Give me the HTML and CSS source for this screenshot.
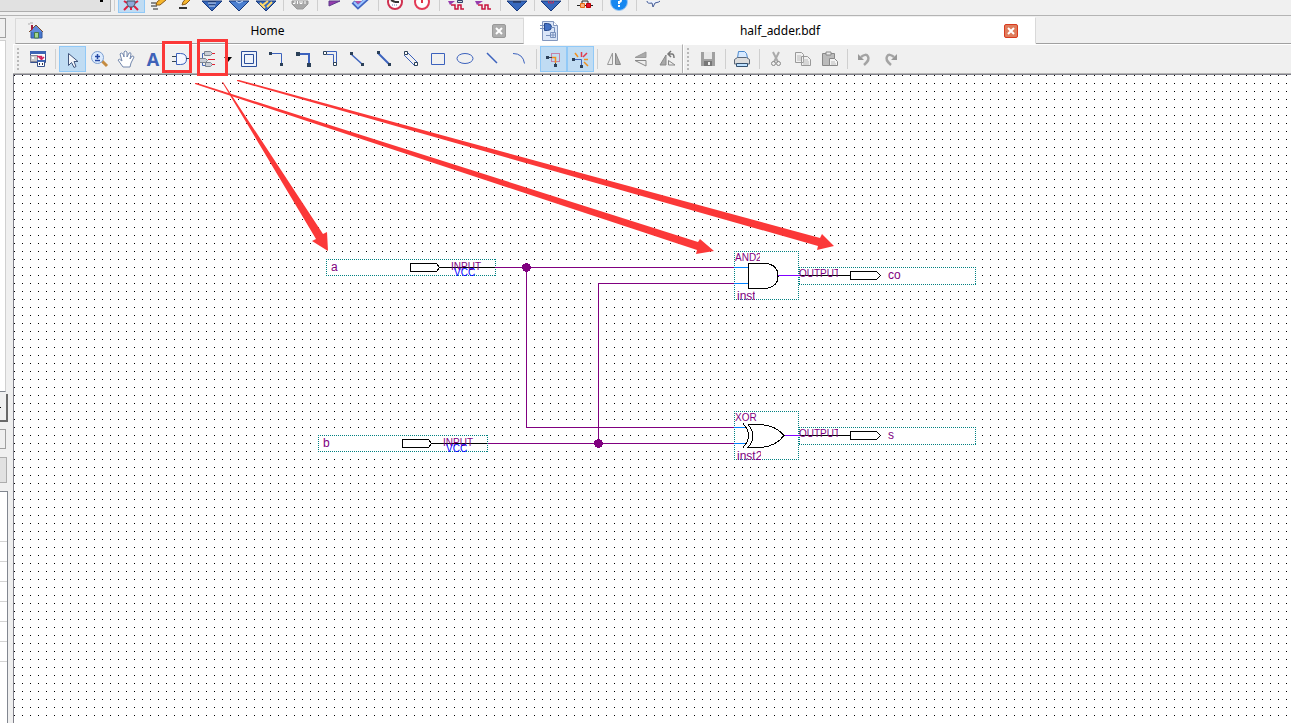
FILE: index.html
```html
<!DOCTYPE html>
<html lang="en">
<head>
<meta charset="utf-8">
<title>half_adder.bdf</title>
<link rel="stylesheet" href="styles.css">
</head>
<body>
<div class="app">
  <header class="main-bar">
    <select class="project-select" aria-label="Project"><option></option></select>
    <span class="sep"></span>
    <button class="tool on" aria-label="Assignment editor"><svg viewBox="0 0 24 11"><path d="M5 0l3 2M19 0l-3 2M5 9l4-4M19 9l-4-4M12 5v4" stroke="#e02040" stroke-width="2" fill="none"/><path d="M8 0h8v3l-2 3h-4L8 3z" fill="#8fa8d8" stroke="#456"/></svg></button>
    <button class="tool" aria-label="Edit assignments"><svg viewBox="0 0 24 11"><path d="M10 4l1-3 6-5 3 3-6 5z" fill="#f6b62c" stroke="#8a5a18"/><path d="M5 2h5M5 5h6M7 8h5" stroke="#222"/></svg></button>
    <button class="tool" aria-label="Edit settings"><svg viewBox="0 0 24 11"><path d="M9 4l1-3 5-6 3 3-5 5z" fill="#f6b62c" stroke="#8a5a18"/><path d="M6 7h8" stroke="#333" stroke-width="2"/></svg></button>
    <button class="tool" aria-label="Pin planner"><svg viewBox="0 0 24 11"><path d="M2 0h20L12 10z" fill="#3668bd" stroke="#17397c"/><path d="M8 1h8M9 4h6" stroke="#16244a"/><path d="M8 2h8M9 5h6" stroke="#c9e0ff"/></svg></button>
    <button class="tool" aria-label="Chip planner"><svg viewBox="0 0 24 11"><path d="M2 0h20L12 10z" fill="#4b7fd0" stroke="#17397c"/><path d="M9 0l3 2 4-2" stroke="#c9e0ff" fill="none"/></svg></button>
    <button class="tool" aria-label="Netlist viewer"><svg viewBox="0 0 24 11"><path d="M2 0h20L12 10z" fill="#3668bd" stroke="#17397c"/><path d="M6 2l5 5M14 0l-5 4M18 1l-5 5" stroke="#ffd968" stroke-width="2" fill="none"/></svg></button>
    <span class="sep"></span>
    <button class="tool" aria-label="Stop processing"><svg viewBox="0 0 24 11"><path d="M4 0h16v3l-5 5H9L4 3z" fill="#a8a8a8" stroke="#999"/><path d="M5 2.500h2V0M9.500 0v3M12 0v2.500h2V0M17 3V0" stroke="#fff" fill="none"/></svg></button>
    <span class="sep"></span>
    <button class="tool" aria-label="Start compilation"><svg viewBox="0 0 24 11"><path d="M7 0h11L7 5z" fill="#963cad" stroke="#5c3b8b"/></svg></button>
    <button class="tool" aria-label="Start analysis"><svg viewBox="0 0 24 11"><path d="M6 0h10L7 4z" fill="#b250a8"/><path d="M4 1l5 5L20-4" stroke="#3f63c0" stroke-width="4" fill="none"/><path d="M5 1l4 4L19-4" stroke="#9cc4ff" stroke-width="2" fill="none"/></svg></button>
    <span class="sep"></span>
    <button class="tool" aria-label="Timing analyzer"><svg viewBox="0 0 24 11"><circle cx="12" cy="1" r="7" fill="#fff" stroke="#cf3150" stroke-width="2"/><path d="M12 1L8-1M12 1h4" stroke="#333" stroke-width="2"/><path d="M9 4h6" stroke="#6a7bb0" stroke-dasharray="1 1"/></svg></button>
    <button class="tool" aria-label="Start timing analysis"><svg viewBox="0 0 24 11"><circle cx="12" cy="1" r="7" fill="#fff" stroke="#e33b56" stroke-width="2"/><path d="M12-3v5" stroke="#d34" stroke-width="2"/></svg></button>
    <span class="sep"></span>
    <button class="tool" aria-label="Gate simulation"><svg viewBox="0 0 24 11"><path d="M4 0h7L6 4z" fill="#963cad"/><path d="M13.500-.5h5v2h-5z" fill="#cdd" stroke="#33406b"/><path d="M7 4h4v4h3V4h3v4h3" stroke="#c8143c" stroke-width="1.500" fill="none"/></svg></button>
    <button class="tool" aria-label="Functional simulation"><svg viewBox="0 0 24 11"><path d="M4 0h8L6 4z" fill="#963cad"/><path d="M7 4h4v4h3V4h3v4h3" stroke="#c8143c" stroke-width="1.500" fill="none"/></svg></button>
    <span class="sep"></span>
    <button class="tool" aria-label="Compilation report"><svg viewBox="0 0 24 11"><path d="M2 0h20L12 10z" fill="#3668bd" stroke="#17397c"/><path d="M8 1h8" stroke="#223" stroke-width="1"/></svg></button>
    <span class="sep"></span>
    <button class="tool" aria-label="Programmer view"><svg viewBox="0 0 24 11"><path d="M2 0h20L12 10z" fill="#3668bd" stroke="#17397c"/><path d="M9.500 0v2h5V0M12 0v2" fill="none" stroke="#b03560"/></svg></button>
    <span class="sep"></span>
    <button class="tool" aria-label="Programmer"><svg viewBox="0 0 24 11"><path d="M9 3V0h6v3M4 4.500h16" stroke="#222" fill="none"/><path d="M7.500 2.500h4v4h-4z" fill="#ffb080" stroke="#e46a14"/><path d="M13.500 2.500h4v4h-4z" fill="#e01030" stroke="#b00"/></svg></button>
    <span class="sep"></span>
    <button class="tool" aria-label="Help"><svg viewBox="0 0 24 11"><circle cx="12" cy="1" r="8.500" fill="#1687f0" stroke="#9cc8f4"/><path d="M14-1q0 2-2 2v2M12 4v2" stroke="#fff" stroke-width="2" fill="none"/></svg></button>
    <span class="sep"></span>
    <button class="tool" aria-label="Feedback"><svg viewBox="0 0 24 11"><path d="M6 0q0 3 5 2l1 4 2-4q5-1 5-2" fill="#eaf1ff" stroke="#435a94"/></svg></button>
  </header>

  <div class="workspace">
    <aside class="side" aria-label="Navigator">
      <div class="side-title"></div>
      <div class="side-tree"></div>
      <button class="side-button" aria-label="Collapse"><svg viewBox="0 0 6 26"><path d="M0 13.500h1" stroke="#000"/></svg></button>
      <div class="side-field"></div>
      <div class="side-head"></div>
      <div class="side-list">
        <div class="side-row first"></div><div class="side-row"></div><div class="side-row"></div><div class="side-row"></div><div class="side-row"></div><div class="side-row"></div><div class="side-row"></div>
      </div>
    </aside>

    <main class="editor">
      <nav class="tabs">
        <div class="tab">
          <svg class="tab-icon" viewBox="0 0 20 20"><path d="M5 10h11v7H5z" fill="#4676cf" stroke="#34589c"/><path d="M3 11l7-7 7 7" fill="#5f8bdc" stroke="#7a4a2c"/><path d="M5 4h2v4l-2 2z" fill="#a01c3c"/><path d="M8.500 11.500h4V17h-4z" fill="#a4d68e" stroke="#467a4a"/><path d="M2 3h2M4 2h3" stroke="#aaa"/></svg>
          <a class="tab-name" href="#home">Home</a>
          <button class="close" aria-label="Close Home"><svg viewBox="0 0 12 12"><path d="M3 3l6 6M9 3l-6 6" stroke="#fff" stroke-width="2"/></svg></button>
        </div>
        <div class="tab active">
          <svg class="tab-icon" viewBox="0 0 20 20"><path d="M3.500.500h11l4 4v15h-15z" fill="#dbe6f8" stroke="#8296bd"/><path d="M14.500.500v4h4" fill="#fff" stroke="#8296bd"/><path d="M5.500 2.500h3q4 0 4 3.500t-4 3.500h-3z" fill="#4371c4" stroke="#27498c"/><path d="M1 4.500h4M1 7.500h4M12 6.500h3.500V11M7 14.500h4M11.500 11.500h5v5h-5zM14 12v5M11 14h6" fill="none" stroke="#7890bc"/></svg>
          <a class="tab-name" href="#half-adder">half_adder.bdf</a>
          <button class="close red" aria-label="Close half_adder.bdf"><svg viewBox="0 0 12 12"><path d="M3 3l6 6M9 3l-6 6" stroke="#fff" stroke-width="2"/></svg></button>
        </div>
        <div class="tab-rest"></div>
      </nav>

      <div class="bars">
        <div class="bar">
          <span class="grip"></span>
          <button class="tool" aria-label="Detach window"><svg viewBox="0 0 24 24"><path d="M4.500 4.500h15v11h-15z" fill="#fff" stroke="#36508c"/><path d="M4 4h16v3H4z" fill="#3c64b4"/><path d="M4.500 8.500h7v6h-7z" fill="#ccc" stroke="#889"/><path d="M6 10h2v2H6z" fill="#fff"/><path d="M11 9.500h4.500V12M13 10l2.500 2.500L18 10" fill="none" stroke="#d0205a" stroke-width="1.500"/><path d="M11.500 13.500h7v6h-7z" fill="#fff" stroke="#36508c"/><path d="M11 13h8v2h-8z" fill="#3c64b4"/><path d="M13 16h1v2h-1zM16 16h1v2h-1z" fill="#334"/></svg></button>
          <span class="sep"></span>
          <button class="tool on" aria-label="Selection tool"><svg viewBox="0 0 24 24"><path d="M8.500 6.500v12l3-3 2.500 5 2-1-2-5h4z" fill="#f4f6fa" stroke="#41557c"/></svg></button>
          <button class="tool" aria-label="Zoom tool"><svg viewBox="0 0 24 24"><path d="M15 14l5 5" stroke="#c58b40" stroke-width="3"/><circle cx="10.500" cy="10.500" r="6" fill="#dcebff" stroke="#7d9fd0"/><path d="M8 9.500h5M10.500 7v5M8 13.500h5" stroke="#2548a4" stroke-width="1.500"/></svg></button>
          <button class="tool" aria-label="Hand tool"><svg viewBox="0 0 24 24"><path d="M9 20L4 13q1-2 4 1L6 7q1-2 3 0l1 3V5q1-2 3 0v5l2-4q2-1 2 1l-1 5 2-3q2 0 2 1l-3 6-1 4z" fill="#fff" stroke="#7488ad"/></svg></button>
          <button class="tool letter" aria-label="Text tool">A</button>
          <button class="tool" aria-label="Symbol tool"><svg viewBox="0 0 24 24"><path d="M8.500 6.500h4q6 0 6 5.500t-6 5.500h-4z" fill="#f4f7ff" stroke="#3c62bd"/><path d="M4 9.500h4M4 14.500h4M18 11.500h3" stroke="#345"/></svg></button>
          <button class="tool" aria-label="Pin tool"><svg viewBox="0 0 24 24"><path d="M7.500 13V6.500H11M7.500 15v3.500H11" fill="none" stroke="#4468b4"/><path d="M9.500 4.500h6l2 2-2 2h-6zM4.500 11.500h6l2 2-2 2h-6zM10.500 15.500h5l2 2-2 2h-5z" fill="#c9ced6" stroke="#7c8590"/><path d="M17 6.500h3M13 12.500h7M17 17.500h3" stroke="#e02030"/></svg></button>
          <button class="tool drop" aria-label="Pin types"><svg viewBox="0 0 14 24"><path d="M3 10h8l-4 5z" fill="#000"/></svg></button>
          <button class="tool" aria-label="Block tool"><svg viewBox="0 0 24 24"><path d="M4.500 4.500h15v15h-15zM7.500 7.500h9v9h-9z" fill="#eef3fb" stroke="#2c4f9c"/></svg></button>
          <button class="tool" aria-label="Orthogonal node"><svg viewBox="0 0 24 24"><path d="M6 6.500h11.500V17" fill="none" stroke="#3c62bd"/><path d="M5 5h3v3H5zM16 16h3v3h-3z" fill="#2b4058"/></svg></button>
          <button class="tool" aria-label="Orthogonal bus"><svg viewBox="0 0 24 24"><path d="M6 7h12v10" fill="none" stroke="#3c62bd" stroke-width="2"/><path d="M5 5h4v4H5zM16 16h4v4h-4z" fill="#2b4058"/></svg></button>
          <button class="tool" aria-label="Orthogonal conduit"><svg viewBox="0 0 24 24"><path d="M9 4.500h9.500V16M9 7.500h6.500V16" fill="none" stroke="#3c62bd"/><path d="M5.500 4.500h3v3h-3zM15.500 15.500h3v3h-3z" fill="#fff" stroke="#2b4058"/></svg></button>
          <button class="tool" aria-label="Diagonal node"><svg viewBox="0 0 24 24"><path d="M6 7l11 10" stroke="#3c62bd" stroke-width="1.500"/><path d="M5 5h3v3H5zM16 16h3v3h-3z" fill="#2b4058"/></svg></button>
          <button class="tool" aria-label="Diagonal bus"><svg viewBox="0 0 24 24"><path d="M6 6l12 12" stroke="#3c62bd" stroke-width="2"/><path d="M5 4h3v3H5zM16 16h3v3h-3z" fill="#2b4058"/></svg></button>
          <button class="tool" aria-label="Diagonal conduit"><svg viewBox="0 0 24 24"><path d="M8 5l11 11M5 8l11 11" stroke="#3c62bd"/><path d="M5.500 4.500h3v3h-3zM15.500 15.500h3v3h-3z" fill="#fff" stroke="#2b4058"/></svg></button>
          <button class="tool" aria-label="Rectangle"><svg viewBox="0 0 24 24"><path d="M5.500 6.500h13v11h-13z" fill="none" stroke="#3c62bd"/></svg></button>
          <button class="tool" aria-label="Oval"><svg viewBox="0 0 24 24"><ellipse cx="12" cy="11.500" rx="8" ry="5" fill="none" stroke="#3c62bd"/></svg></button>
          <button class="tool" aria-label="Line"><svg viewBox="0 0 24 24"><path d="M7 6l10 10" stroke="#3c62bd" stroke-width="1.500"/></svg></button>
          <button class="tool" aria-label="Arc"><svg viewBox="0 0 24 24"><path d="M6 6.500q10 0 11.500 10" fill="none" stroke="#3c62bd"/></svg></button>
          <span class="sep"></span>
          <button class="tool on" aria-label="Rubberbanding"><svg viewBox="0 0 24 24"><path d="M10.500 6.500h8v8h-8z" fill="none" stroke="#c8285a" stroke-dasharray="1 1"/><path d="M8 10.500h4M14.500 15v3" stroke="#2b4058"/><path d="M11 10.500h3.500V16" fill="none" stroke="#f09020" stroke-width="1.500"/><path d="M5 9h3v3H5zM13 17h3v3h-3z" fill="#2b4058"/></svg></button>
          <button class="tool on" aria-label="Partial line selection"><svg viewBox="0 0 24 24"><path d="M6 12.500h7.500V18" fill="none" stroke="#3c62bd"/><path d="M4 11h3v3H4zM12 18h3v3h-3z" fill="#2b4058"/><path d="M7 6l3 4M16 12.500h4M16 15l4 4" stroke="#f09020" stroke-width="1.500"/><path d="M13.500 5v5M19 6l-4 4" stroke="#e03a4c" stroke-width="1.500"/></svg></button>
          <span class="sep"></span>
          <button class="tool" aria-label="Flip horizontal"><svg viewBox="0 0 24 24"><path d="M10.500 6v11.500h-5z" fill="#eee" stroke="#999"/><path d="M13.500 6v11.500h5z" fill="#aaa" stroke="#888"/></svg></button>
          <button class="tool" aria-label="Flip vertical"><svg viewBox="0 0 24 24"><path d="M17 5v5.500H6z" fill="#aaa" stroke="#999"/><path d="M6 13.500h11V19z" fill="#eee" stroke="#888"/></svg></button>
          <button class="tool" aria-label="Rotate left"><svg viewBox="0 0 24 24"><path d="M10 8v10H4z" fill="#aaa" stroke="#888"/><path d="M12.500 13.500V18H19z" fill="#eee" stroke="#888"/><path d="M13 7h3q2 0 2 4M15 4l-3 3 3 3" fill="none" stroke="#777" stroke-width="1.500"/></svg></button>
        </div>
        <div class="bar grow">
          <span class="grip"></span>
          <button class="tool" aria-label="Save"><svg viewBox="0 0 24 24"><path d="M5 5h14v14H5z" fill="#a0a0a0"/><path d="M8 5h8v7H8z" fill="#e8e8e8"/><path d="M8 14h8v5H8z" fill="#777"/><path d="M12 15h2v3h-2z" fill="#eee"/></svg></button>
          <span class="sep"></span>
          <button class="tool" aria-label="Print"><svg viewBox="0 0 24 24"><path d="M7.500 11l1-6.500h6l2 2 1 4.500" fill="#d8eaff" stroke="#4d8bd0"/><path d="M4.500 12.500l3-2h9l3 2V17h-15z" fill="#ddd" stroke="#5c6878"/><path d="M6.500 16.500h11v3h-11z" fill="#bde0ff" stroke="#34506e"/></svg></button>
          <span class="sep"></span>
          <button class="tool" aria-label="Cut"><svg viewBox="0 0 24 24"><path d="M9 5l5 10M15 5l-5 10" stroke="#aaa" stroke-width="2"/><circle cx="9.500" cy="16.500" r="2" fill="none" stroke="#888"/><circle cx="14.500" cy="16.500" r="2" fill="none" stroke="#888"/></svg></button>
          <button class="tool" aria-label="Copy"><svg viewBox="0 0 24 24"><path d="M4.500 5.500h6l2 2v8h-8zM10.500 9.500h6l3 3v6h-9z" fill="#f1f1f1" stroke="#999"/><path d="M6 9h4M6 11h4M6 13h4M12 13h5M12 15h6M12 17h6" stroke="#bbb"/></svg></button>
          <button class="tool" aria-label="Paste"><svg viewBox="0 0 24 24"><path d="M4.500 6.500h12v12h-12z" fill="#bbb" stroke="#888"/><path d="M8 5h5v3H8z" fill="#eee" stroke="#888"/><path d="M11.500 11.500h5l3 3v4h-8z" fill="#f4f4f4" stroke="#888"/><path d="M13 15h4M13 17h5" stroke="#bbb"/></svg></button>
          <span class="sep"></span>
          <button class="tool" aria-label="Undo"><svg viewBox="0 0 24 24"><path d="M9 10q5-4 7-.5t-4 8.500" fill="none" stroke="#a4a4a4" stroke-width="2.500"/><path d="M6 7v6h6z" fill="#999"/></svg></button>
          <button class="tool" aria-label="Redo"><svg viewBox="0 0 24 24"><path d="M15 10q-5-4-7-.5t4 8.500" fill="none" stroke="#a4a4a4" stroke-width="2.500"/><path d="M18 7v6h-6z" fill="#999"/></svg></button>
        </div>
      </div>

      <div class="canvas">
        <svg class="schematic" width="1277" height="648" viewBox="14 75 1277 648">
          <defs>
            <clipPath id="clip-and"><path d="M734 250h26v14h-26z"/></clipPath>
            <clipPath id="clip-inst"><path d="M734 288h21v16h-21z"/></clipPath>
            <clipPath id="clip-xor"><path d="M734 410h23v14h-23z"/></clipPath>
            <clipPath id="clip-inst2"><path d="M734 448h27v16h-27z"/></clipPath>
            <clipPath id="clip-out"><path d="M799 260h39v190h-39z"/></clipPath>
            <g id="in-pin">
              <path class="paper" d="M0 0h170v17H0z"/>
              <path class="frame" d="M0 .5h170M0 16.500h170M.5 0v17M169.500 0v17"/>
              <path class="ink" d="M84.500 4.500h26l3 4-3 4h-26zM114 8.500h55"/>
            </g>
            <g id="out-pin">
              <path class="paper" d="M0 0h177v18H0z"/>
              <path class="frame" d="M0 .5h177M0 17.500h177M.5 0v18M176.500 0v18"/>
              <path class="ink" d="M1 8.500h50M51.500 4.500h26l4 4-4 4h-26z"/>
            </g>
            <g id="gate-box">
              <path class="paper" d="M0 0h65v49H0z"/>
              <path class="frame" d="M0 .5h65M0 48.500h65M.5 0v49M64.500 0v49"/>
            </g>
          </defs>
          <use href="#in-pin" x="326" y="259"/>
          <use href="#in-pin" x="318" y="435"/>
          <use href="#out-pin" x="799" y="267"/>
          <use href="#out-pin" x="799" y="427"/>
          <use href="#gate-box" x="734" y="251"/>
          <use href="#gate-box" x="734" y="411"/>
          <path class="wire" d="M495 267.500h239M526.500 267v160.500H734M734 283.500H598.500V443M488 443.500h246"/>
          <circle class="joint" cx="526.500" cy="267.500" r="4.500"/>
          <circle class="joint" cx="598.500" cy="443.500" r="4.500"/>
          <path class="port" d="M734 267.500h14M734 283.500h14M734 427.500h13M734 443.500h13"/>
          <path class="result" d="M778 275.500h22M784 435.500h16"/>
          <path class="ink" d="M748.500 263.500h17q12 1 12.500 12t-12.500 13h-17z"/>
          <path class="ink" d="M748 424.500h12q16 1 24 11q-8 11-24 12h-12q10-12 0-23"/>
          <path class="curve" d="M743 423.500q11 12 0 24"/>
          <text class="pin-text" x="451" y="270">INPUT</text>
          <text class="pin-text vcc" x="454" y="276">VCC</text>
          <text class="pin-text" x="443" y="446">INPUT</text>
          <text class="pin-text vcc" x="446" y="452">VCC</text>
          <g clip-path="url(#clip-out)"><text class="pin-text" x="799" y="277">OUTPUT</text><text class="pin-text" x="799" y="437">OUTPUT</text></g>
          <g clip-path="url(#clip-and)"><text class="pin-text" x="735" y="261">AND2</text></g>
          <g clip-path="url(#clip-xor)"><text class="pin-text" x="735" y="421">XOR</text></g>
          <g clip-path="url(#clip-inst)"><text class="name" x="737" y="300">inst</text></g>
          <g clip-path="url(#clip-inst2)"><text class="name" x="737" y="460">inst2</text></g>
          <text class="name" x="331" y="271">a</text>
          <text class="name" x="323" y="447">b</text>
          <text class="name" x="888" y="279">co</text>
          <text class="name" x="888" y="439">s</text>
        </svg>
      </div>
    </main>
  </div>

  <svg class="notes" aria-hidden="true">
    <path class="note-box" d="M163.500 42.500h27v29h-27zM198.500 40.500h28v34h-28z"/>
    <path class="note-arrow" d="M222 82h1L323 234l4-2 1 19-16-10 4-2z"/>
    <path class="note-arrow" d="M195 83h2L698 242l2-3 14 12-18 3 1-4L195 84z"/>
    <path class="note-arrow" d="M237 80h2L820 238l2-4 12 12-17 4 1-4L237 81z"/>
  </svg>
</div>
</body>
</html>
```

FILE: styles.css
```css
* { box-sizing: border-box; }

body {
  margin: 0;
  background: #f0f0f0;
  color: #000;
  font: 12px/16px "Noto Sans", sans-serif;
}

button { margin: 0; padding: 0; border: 0; background: none; font: inherit; }

.app {
  position: relative;
  display: flex;
  flex-direction: column;
  height: 100vh;
  overflow: hidden;
}

.tool {
  display: flex;
  flex: none;
  align-items: center;
  width: 27px;
  height: 26px;
  padding: 0 2px 0 1px;
}
.tool svg { flex: none; width: 24px; height: 24px; }
.tool.on { padding: 0; border: 1px solid #91c9f7; background: #c0dcf3; }
.tool.drop { width: 15px; padding: 0; }
.tool.drop svg { width: 14px; }
.tool.letter {
  justify-content: center;
  color: #3f62b8;
  font: bold 18px/24px "Noto Sans", sans-serif;
}

.sep {
  flex: none;
  width: 1px;
  height: 20px;
  margin: 3px;
  background: #cfcfcf;
}

/* main toolbar, scrolled under the window's top edge */
.main-bar {
  display: flex;
  flex: none;
  height: 16px;
  overflow: hidden;
  border-bottom: 1px solid #b4b4b4;
}
.project-select {
  width: 111px;
  height: 12px;
  padding: 0;
  border: 1px solid #adadad;
  border-width: 0 1px 1px 0;
  border-radius: 0;
  appearance: none;
  background: #e1e1e1 linear-gradient(#000, #000) 100px 0 / 3px 2px no-repeat;
}
.main-bar .tool { align-items: flex-start; height: 13px; }
.main-bar .tool svg { height: 11px; margin-top: 1px; overflow: visible; }
.main-bar .tool.on { border-top: 0; }
.main-bar .sep { height: 11px; margin-top: 0; }

.workspace { display: flex; flex: 1; min-height: 0; }

/* docked panel, mostly off the left edge */
.side {
  display: flex;
  flex: none;
  flex-direction: column;
  width: 13px;
  padding-top: 2px;
}
.side-title { width: 6px; height: 20px; border: 1px solid #a0a0a0; border-left: 0; }
.side-tree {
  width: 6px;
  height: 352px;
  margin-top: 2px;
  border: 1px solid #d0d0d0;
  border-left: 0;
  border-bottom-color: #828790;
  background: #fff;
}
.side-button {
  display: flex;
  width: 8px;
  height: 28px;
  margin-top: 2px;
  border: solid #696969;
  border-width: 0 2px 2px 0;
}
.side-button svg { width: 6px; height: 26px; }
.side-field { width: 6px; height: 20px; margin-top: 7px; border: 1px solid #a0a0a0; border-left: 0; }
.side-head { width: 7px; height: 26px; margin-top: 8px; border: 1px solid #adadad; border-left: 0; background: #e1e1e1; }
.side-list {
  flex: 1;
  width: 8px;
  margin-top: 8px;
  border: solid #828790;
  border-width: 1px 1px 0 0;
  background: #fff;
}
.side-row { height: 20px; border-bottom: 1px solid #d4d4d4; }
.side-row.first { height: 50px; }

.editor { display: flex; flex: 1; flex-direction: column; min-width: 0; }

.tabs { display: flex; flex: none; height: 28px; padding: 1px 0 0 2px; }
.tab {
  display: flex;
  flex: 0 1 509px;
  align-items: center;
  min-width: 0;
  margin-top: 1px;
  padding: 0 17px 0 10px;
  border: 1px solid #d9d9d9;
  border-bottom-color: #a0a0a0;
}
.tab.active {
  flex-basis: 512px;
  margin-top: 0;
  padding-left: 14px;
  border-color: #fff #d9d9d9 #fff #fff;
  background: #fff;
}
.tab-rest { flex: 1; border-bottom: 1px solid #a0a0a0; }
.tab-icon { flex: none; width: 20px; height: 20px; }
.tab-name { flex: 1; margin-right: 3px; text-align: center; color: #000; text-decoration: none; }
.close {
  display: flex;
  flex: none;
  width: 14px;
  height: 14px;
  border: 1px solid #999;
  border-radius: 2px;
  background: #adadad;
}
.close svg { width: 12px; height: 12px; }
.close.red { border-color: #d93a1e; background: #df7c5c; }

.bars { display: flex; flex: none; border-bottom: 1px solid #b4b4b4; }
.bar {
  display: flex;
  align-items: center;
  height: 29px;
  border-top: 1px solid #fff;
  border-left: 1px solid #fff;
}
.bar:first-child { border-right: 1px solid #b0b0b0; }
.bar.grow { flex: 1; }
.grip {
  flex: none;
  width: 2px;
  height: 22px;
  margin: 0 6px 0 3px;
  background: repeating-linear-gradient(#b8b8b8 0 2px, transparent 2px 4px);
}

/* one black dot every 8px */
.canvas {
  flex: 1;
  min-height: 0;
  overflow: hidden;
  border: solid #80808a;
  border-width: 1px 0 0 1px;
  background:
    linear-gradient(90deg, transparent 1px, #fff 1px) 0 0 / 8px 8px,
    linear-gradient(#000 1px, #fff 1px) 0 0 / 8px 8px;
}

.schematic { display: block; font-family: "Liberation Sans", Arial, sans-serif; shape-rendering: crispEdges; }
.paper { fill: #fff; }
.frame { fill: none; stroke: #008080; stroke-dasharray: 1 1; }
.ink { fill: #fff; stroke: #000; }
.curve { fill: none; stroke: #000; }
.wire { fill: none; stroke: #800080; }
.joint { fill: #800080; }
.port { stroke: #0080ff; }
.result { stroke: #8000ff; }
.pin-text { font-size: 10px; fill: #800080; }
.vcc { fill: #0000ff; }
.name { font-size: 12px; fill: #800080; }

/* red pointers over the editor */
.notes {
  position: absolute;
  top: 0;
  left: 0;
  width: 100%;
  height: 100%;
  pointer-events: none;
}
.note-box { fill: none; stroke: #fb3838; stroke-width: 3; }
.note-arrow { fill: #fb3838; }
```
